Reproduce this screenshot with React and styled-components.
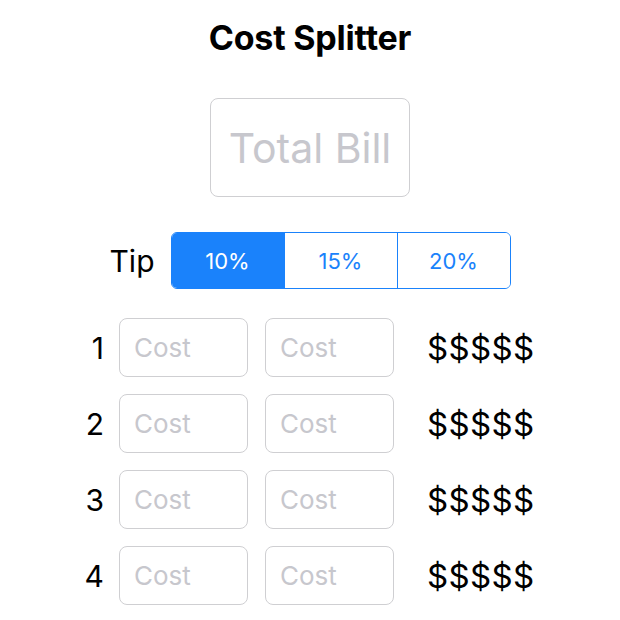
import React, { useState } from "react";
import styled, { createGlobalStyle } from "styled-components";

const GlobalStyle = createGlobalStyle`
  html, body {
    margin: 0;
    padding: 0;
    background: #ffffff;
    font-family: Inter, "Noto Sans", sans-serif;
    color: #000;
  }
`;

const Page = styled.div`
  width: 620px;
  display: flex;
  flex-direction: column;
  align-items: center;
  padding-top: 16px;
`;

const Title = styled.h1`
  margin: 0;
  font-size: 34px;
  line-height: 44px;
  font-weight: 700;
  letter-spacing: -0.2px;
`;

const TotalInput = styled.input`
  box-sizing: border-box;
  margin-top: 38px;
  width: 200px;
  height: 99px;
  border: 1px solid #cfcfd2;
  border-radius: 8px;
  font-family: inherit;
  font-size: 41px;
  text-align: center;
  outline: none;
  padding: 0;
  &::placeholder {
    color: #c7c7cd;
  }
`;

const TipRow = styled.div`
  margin-top: 35px;
  display: flex;
  align-items: center;
  gap: 16px;
`;

const Label = styled.span`
  font-size: 30px;
  line-height: 36px;
`;

const Segmented = styled.div`
  display: flex;
  width: 340px;
  height: 57px;
  box-sizing: border-box;
  border: 1.5px solid #1a82fb;
  border-radius: 6px;
  overflow: hidden;
`;

const Segment = styled.button`
  flex: 1;
  border: none;
  border-left: ${(p) => (p.$first ? "none" : "1.5px solid #1a82fb")};
  background: ${(p) => (p.$active ? "#1a82fb" : "#ffffff")};
  color: ${(p) => (p.$active ? "#ffffff" : "#1a82fb")};
  font-family: inherit;
  font-size: 22px;
  padding: 0;
  cursor: pointer;
`;

const Rows = styled.div`
  margin-top: 29px;
  display: flex;
  flex-direction: column;
  gap: 17px;
`;

const Row = styled.div`
  display: flex;
  align-items: center;
`;

const Num = styled.span`
  width: 15px;
  display: flex;
  justify-content: flex-end;
  white-space: nowrap;
  font-size: 30px;
  margin-right: 15px;
`;

const CostInput = styled.input`
  box-sizing: border-box;
  width: 129px;
  height: 59px;
  border: 1px solid #cfcfd2;
  border-radius: 8px;
  font-family: inherit;
  font-size: 26px;
  padding: 0 14px;
  outline: none;
  & + & {
    margin-left: 17px;
  }
  &::placeholder {
    color: #c7c7cd;
  }
`;

const Amount = styled.span`
  margin-left: 33px;
  font-size: 33px;
  letter-spacing: 0.3px;
  width: 104px;
  white-space: nowrap;
`;

const tips = ["10%", "15%", "20%"];

export default function App() {
  const [tip, setTip] = useState(0);
  return (
    <Page>
      <GlobalStyle />
      <Title>Cost Splitter</Title>
      <TotalInput placeholder="Total Bill" />
      <TipRow>
        <Label>Tip</Label>
        <Segmented>
          {tips.map((t, i) => (
            <Segment key={t} $first={i === 0} $active={tip === i} onClick={() => setTip(i)}>
              {t}
            </Segment>
          ))}
        </Segmented>
      </TipRow>
      <Rows>
        {[1, 2, 3, 4].map((n) => (
          <Row key={n}>
            <Num>{n}</Num>
            <CostInput placeholder="Cost" />
            <CostInput placeholder="Cost" />
            <Amount>$$$$$</Amount>
          </Row>
        ))}
      </Rows>
    </Page>
  );
}
